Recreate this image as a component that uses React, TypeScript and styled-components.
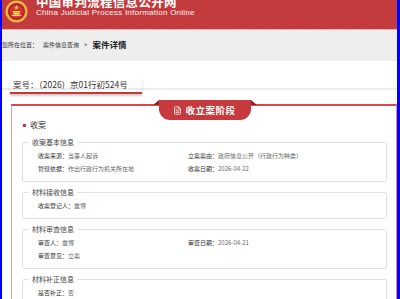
import styled, { createGlobalStyle } from "styled-components"
import { FileText } from "lucide-react"

const GlobalStyle = createGlobalStyle`
  html, body {
    margin: 0;
    padding: 0;
    background: #ffffff;
  }
  body {
    font-family: "Noto Sans CJK SC", "Liberation Sans", sans-serif;
    color: #333;
  }
`

type Row = { label: string; value: string }
type Group = { title: string; rows: Row[][] }

const groups: Group[] = [
  {
    title: "收案基本信息",
    rows: [
      [
        { label: "收案来源：", value: "当事人起诉" },
        { label: "立案案由：", value: "政府信息公开（行政行为种类）" },
      ],
      [
        { label: "管辖依据：", value: "作出行政行为机关所在地" },
        { label: "收案日期：", value: "2026-04-22" },
      ],
    ],
  },
  {
    title: "材料接收信息",
    rows: [[{ label: "收案登记人：", value: "章博" }]],
  },
  {
    title: "材料审查信息",
    rows: [
      [
        { label: "审查人：", value: "章博" },
        { label: "审查日期：", value: "2026-04-21" },
      ],
      [{ label: "审查意见：", value: "立案" }],
    ],
  },
  {
    title: "材料补正信息",
    rows: [[{ label: "是否补正：", value: "否" }]],
  },
]

const Emblem = () => (
  <EmblemSvg viewBox="0 0 24 24" width={23} height={23}>
    <circle cx="12" cy="12" r="11.5" fill="#e9b43a" />
    <circle cx="12" cy="12" r="9.5" fill="#b8262a" stroke="#f2cf62" strokeWidth="0.8" />
    <circle cx="12" cy="12" r="6.8" fill="#d8322f" />
    <path d="M12 5.2l0.7 1.9h2l-1.6 1.2 0.6 1.9-1.7-1.2-1.7 1.2 0.6-1.9-1.6-1.2h2z" fill="#f5d25a" />
    <rect x="8" y="11.5" width="8" height="1.4" fill="#f5d25a" />
    <rect x="8.8" y="13" width="6.4" height="2.4" fill="#f5d25a" />
    <rect x="7" y="15.6" width="10" height="1.2" fill="#f5d25a" />
  </EmblemSvg>
)

const App = () => {
  return (
    <Page>
      <GlobalStyle />
      <Header>
        <Emblem />
        <Brand>
          <BrandTitle>中国审判流程信息公开网</BrandTitle>
          <BrandSub>China Judicial Process Information Online</BrandSub>
        </Brand>
      </Header>

      <Crumbs>
        <CrumbText>您所在位置：</CrumbText>
        <CrumbText>案件信息查询</CrumbText>
        <CrumbText>&gt;</CrumbText>
        <CrumbCurrent>案件详情</CrumbCurrent>
      </Crumbs>

      <CaseBar>
        <CaseNo>案号：（2026）京01行初524号</CaseNo>
      </CaseBar>

      <Main>
        <StageCard>
          <StageHead>
            <StageBadge>
              <FileText size={9} strokeWidth={2} />
              <span>收立案阶段</span>
            </StageBadge>
          </StageHead>

          <SectionTitle>收案</SectionTitle>

          {groups.map((group) => (
            <Box key={group.title}>
              <BoxLegend>{group.title}</BoxLegend>
              {group.rows.map((row, i) => (
                <InfoRow key={i}>
                  {row.map((cell) => (
                    <Cell key={cell.label}>
                      <Label>{cell.label}</Label>
                      <Value>{cell.value}</Value>
                    </Cell>
                  ))}
                </InfoRow>
              ))}
            </Box>
          ))}
        </StageCard>
      </Main>
    </Page>
  )
}

export default App

const Page = styled.div`
  height: 299px;
  overflow: hidden;
  border-left: 2px solid #0000ff;
  border-right: 3px solid #0000ff;
  background: #ffffff;
`

const Header = styled.header`
  height: 30px;
  overflow: hidden;
  display: flex;
  align-items: flex-end;
  gap: 8px;
  padding: 0 0 12px 3px;
  box-sizing: border-box;
  background: repeating-linear-gradient(
    135deg,
    #c53c3f 0px,
    #c53c3f 2px,
    #c1393c 2px,
    #c1393c 4px
  );
  border-bottom: 1px solid #e9b3b3;
`

const EmblemSvg = styled.svg`
  flex: none;
  margin-bottom: -6px;
`

const Brand = styled.div`
  display: flex;
  flex-direction: column;
  color: #ffffff;
`

const BrandTitle = styled.div`
  font-size: 12.5px;
  line-height: 12px;
  font-weight: 700;
  letter-spacing: 0.3px;
  white-space: nowrap;
`

const BrandSub = styled.div`
  font-family: "Liberation Sans", "Noto Sans", sans-serif;
  font-size: 8px;
  line-height: 9px;
  letter-spacing: 0.25px;
  white-space: nowrap;
  opacity: 0.95;
`

const Crumbs = styled.div`
  display: flex;
  align-items: center;
  gap: 3px;
  height: 31px;
  padding: 0 0 3px 0;
  box-sizing: border-box;
  background: #eeeeee;
  white-space: nowrap;
`

const CrumbText = styled.span`
  font-size: 6px;
  color: #333;
  margin-right: 2px;
`

const CrumbCurrent = styled.span`
  font-size: 8.5px;
  font-weight: 700;
  color: #222;
`

const CaseBar = styled.div`
  height: 29px;
  padding: 8px 0 0 8px;
  box-sizing: border-box;
  border-bottom: 2px solid #ececec;
`

const CaseNo = styled.div`
  display: inline-block;
  font-size: 8.5px;
  line-height: 12px;
  color: #333;
  padding: 0 14px 2px 3px;
  border-bottom: 2px solid #c8373a;
  box-shadow: 0 2px 2px rgba(0, 0, 0, 0.2);
  white-space: nowrap;
`

const Main = styled.div`
  padding: 14px 0 0 9px;
`

const StageCard = styled.section`
  border: 1px solid #ef9a9a;
  border-top: 2px solid #d9484b;
  border-right-color: #ee8d8f;
  background: #ffffff;
  padding: 0 9px 0 10px;
`

const StageHead = styled.div`
  display: flex;
  justify-content: center;
  margin-top: -6px;
`

const StageBadge = styled.div`
  position: relative;
  display: flex;
  align-items: center;
  justify-content: center;
  gap: 3px;
  width: 92px;
  height: 20px;
  background: #c6393d;
  border-radius: 0 0 11px 11px;
  color: #ffffff;
  font-size: 9.5px;
  font-weight: 700;
  letter-spacing: 0.5px;

  &::before,
  &::after {
    content: "";
    position: absolute;
    top: 0;
    width: 0;
    height: 0;
    border-bottom: 5px solid #8e2226;
  }
  &::before {
    left: -6px;
    border-left: 6px solid transparent;
  }
  &::after {
    right: -6px;
    border-right: 6px solid transparent;
  }
`

const SectionTitle = styled.div`
  display: flex;
  align-items: center;
  gap: 4px;
  margin: 0 0 8px 1px;
  font-size: 8px;
  line-height: 10px;
  color: #333;

  &::before {
    content: "";
    width: 3px;
    height: 3px;
    background: #c8373a;
  }
`

const Box = styled.fieldset`
  margin: 0 0 6px 0;
  padding: 2px 0 6px 0;
  border: 1px solid #e2e2e2;
  border-radius: 2px;
  box-shadow: 0 0 1px rgba(0, 0, 0, 0.05);
  min-width: 0;
`

const BoxLegend = styled.legend`
  margin-left: 6px;
  padding: 0 3px;
  font-size: 7px;
  line-height: 9px;
  color: #444;
`

const InfoRow = styled.div`
  display: grid;
  grid-template-columns: 150px 1fr;
  height: 13px;
  align-items: center;
  padding-left: 15px;
`

const Cell = styled.div`
  white-space: nowrap;
  font-size: 6px;
`

const Label = styled.span`
  color: #333;
`

const Value = styled.span`
  color: #666;
`
